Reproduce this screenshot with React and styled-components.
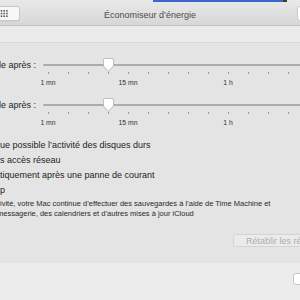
import React from 'react';
import styled, { createGlobalStyle } from 'styled-components';

const GlobalStyle = createGlobalStyle`
  html, body {
    margin: 0;
    padding: 0;
    overflow: hidden;
    background: #e4e4e4;
  }
  body {
    font-family: "Liberation Sans", Arial, sans-serif;
  }
`;

const Window = styled.div`
  width: 300px;
  height: 300px;
  overflow: hidden;
  display: flex;
  flex-direction: column;
  background: #e4e4e4;
`;

const TitleBar = styled.header`
  flex: none;
  height: 25px;
  display: flex;
  flex-direction: column;
  background: linear-gradient(#e9e9e9, #d7d7d7);
  border-bottom: 1px solid #c3c3c3;
`;

const Strip = styled.div`
  height: 2px;
  display: flex;
`;

const StripPart = styled.div`
  width: ${(p) => p.w}px;
  background: ${(p) => p.c};
`;

const Toolbar = styled.div`
  flex: 1;
  display: grid;
  grid-template-columns: 1fr auto 1fr;
  align-items: center;
`;

const GridButton = styled.button`
  justify-self: start;
  width: 32px;
  height: 15px;
  margin-left: -12px;
  padding: 0;
  display: flex;
  align-items: center;
  justify-content: center;
  background: #f7f7f7;
  border: 1px solid #c9c9c9;
  border-radius: 3px;
  box-shadow: 0 0.5px 0 rgba(0, 0, 0, 0.08);
  svg {
    margin-left: -3px;
  }
`;

const Title = styled.h1`
  margin: 0;
  padding-top: 2px;
  font-size: 9px;
  font-weight: normal;
  color: #4d4d4d;
  white-space: nowrap;
`;

const SearchField = styled.div`
  justify-self: end;
  width: 40px;
  height: 15px;
  margin-right: -37px;
  box-sizing: border-box;
  background: #ffffff;
  border: 1px solid #c9c9c9;
  border-radius: 3px;
`;

const Band = styled.div`
  flex: none;
  height: 16px;
  background: #ebebeb;
  border-bottom: 1px solid #d9d9d9;
`;

const Content = styled.main`
  flex: none;
  height: 220px;
  box-sizing: border-box;
  padding-top: 15px;
  display: flex;
  flex-direction: column;
  background: #e4e4e4;
  color: #232323;
`;

const SliderRow = styled.div`
  height: ${(p) => p.h}px;
  display: grid;
  grid-template-columns: 38px 1fr;
  column-gap: 5px;
  align-items: start;
`;

const RowLabel = styled.div`
  display: flex;
  justify-content: flex-end;
  overflow: hidden;
  white-space: nowrap;
  padding-right: 2px;
  font-size: 9px;
  line-height: 14px;
`;

const SliderArea = styled.div`
  display: flex;
  flex-direction: column;
`;

const TrackWrap = styled.div`
  position: relative;
  height: 14px;
`;

const Track = styled.div`
  margin-top: 6px;
  height: 2px;
  border-radius: 1px;
  background: #acacac;
`;

const Thumb = styled.svg`
  position: absolute;
  top: 0;
  left: ${(p) => p.pos - 5.5}px;
  filter: drop-shadow(0 0.5px 0.5px rgba(0, 0, 0, 0.18));
`;

const Scale = styled.div`
  margin-left: -5px;
  display: grid;
  grid-template-columns: repeat(14, 20px);
  grid-template-rows: 3px 10px;
  row-gap: 3px;
`;

const Tick = styled.span`
  grid-row: 1;
  justify-self: center;
  width: 1px;
  height: 2px;
  background: #9d9d9d;
`;

const ScaleLabel = styled.span`
  grid-row: 2;
  grid-column: ${(p) => p.col};
  justify-self: center;
  white-space: nowrap;
  font-size: 6.8px;
  line-height: 10px;
  color: #2e3142;
`;

const Options = styled.div`
  margin-top: 10px;
  display: flex;
  flex-direction: column;
`;

const Option = styled.div`
  font-size: 9px;
  line-height: 15px;
  white-space: nowrap;
`;

const Description = styled.p`
  margin: 0;
  padding-top: 1px;
  font-size: 7.5px;
  line-height: 10px;
  white-space: nowrap;
  color: #2a2a2a;
`;

const DescLine = styled.span`
  display: block;
  text-indent: ${(p) => p.indent || 0}px;
`;

const ButtonRow = styled.div`
  margin-top: 15px;
  display: flex;
  justify-content: flex-end;
`;

const PushButton = styled.button`
  flex: none;
  width: ${(p) => p.w}px;
  height: ${(p) => p.h}px;
  margin-right: ${(p) => p.mr}px;
  padding: 0 0 0 12px;
  text-align: left;
  font-family: inherit;
  font-size: 9px;
  white-space: nowrap;
  color: #ababab;
  background: ${(p) => (p.white ? '#ffffff' : '#ebebeb')};
  border: 1px solid ${(p) => (p.white ? '#c6c6c6' : '#d3d3d3')};
  border-radius: 3px;
`;

const Footer = styled.footer`
  flex: 1;
  padding-top: 10px;
  display: flex;
  justify-content: flex-end;
  align-items: flex-start;
  background: #ececec;
`;

function Slider({ label, value, height }) {
  const ticks = Array.from({ length: 14 });
  return (
    <SliderRow h={height}>
      <RowLabel>
        <span>{label}</span>
      </RowLabel>
      <SliderArea>
        <TrackWrap>
          <Track />
          <Thumb pos={value} width="11" height="14" viewBox="0 0 11 14">
            <path
              d="M2 0.5 H9 A1.5 1.5 0 0 1 10.5 2 V8 L5.5 13.3 L0.5 8 V2 A1.5 1.5 0 0 1 2 0.5 Z"
              fill="#ffffff"
              stroke="#b9b9b9"
              strokeWidth="0.8"
            />
          </Thumb>
        </TrackWrap>
        <Scale>
          {ticks.map((_, i) => (
            <Tick key={i} />
          ))}
          <ScaleLabel col={1}>1 mn</ScaleLabel>
          <ScaleLabel col={5}>15 mn</ScaleLabel>
          <ScaleLabel col={10}>1 h</ScaleLabel>
        </Scale>
      </SliderArea>
    </SliderRow>
  );
}

export default function App() {
  return (
    <>
      <GlobalStyle />
      <Window>
        <TitleBar>
          <Strip>
            <StripPart w={153} c="transparent" />
            <StripPart w={130} c="#3c66cf" />
            <StripPart w={4} c="#3a3a3a" />
          </Strip>
          <Toolbar>
            <GridButton aria-label="Tout afficher">
              <svg width="10" height="8" viewBox="0 0 10 8">
                {[0, 1, 2].map((r) =>
                  [0, 1, 2, 3].map((c) => (
                    <rect
                      key={`${r}-${c}`}
                      x={c * 2.7}
                      y={r * 2.7}
                      width="1.6"
                      height="1.6"
                      fill="#5c5c5c"
                    />
                  ))
                )}
              </svg>
            </GridButton>
            <Title>Économiseur d’énergie</Title>
            <SearchField />
          </Toolbar>
        </TitleBar>
        <Band />
        <Content>
          <Slider label="Mettre l’ordinateur en veille après :" value={65} height={40} />
          <Slider label="Mettre l’écran en veille après :" value={65} height={30} />
          <Options>
            <Option>ue possible l’activité des disques durs</Option>
            <Option>s accès réseau</Option>
            <Option>tiquement après une panne de courant</Option>
            <Option>p</Option>
          </Options>
          <Description>
            <DescLine>
              ivité, votre Mac continue d’effectuer des sauvegardes à l’aide de Time Machine et
            </DescLine>
            <DescLine indent={-3}>
              messagerie, des calendriers et d’autres mises à jour iCloud
            </DescLine>
          </Description>
          <ButtonRow>
            <PushButton w={151} h={13} mr={-84} disabled>
              Rétablir les réglages par défaut
            </PushButton>
          </ButtonRow>
        </Content>
        <Footer>
          <PushButton w={60} h={12} mr={-53} white>
            Planification…
          </PushButton>
        </Footer>
      </Window>
    </>
  );
}
